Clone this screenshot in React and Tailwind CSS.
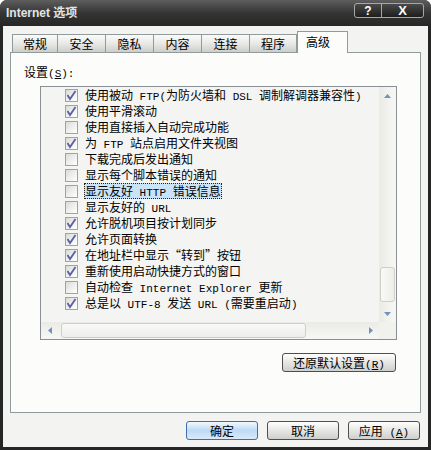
import React from 'react';

const items = [
    { label: '使用被动 FTP(为防火墙和 DSL 调制解调器兼容性)', checked: true },
    { label: '使用平滑滚动', checked: true },
    { label: '使用直接插入自动完成功能', checked: false },
    { label: '为 FTP 站点启用文件夹视图', checked: true },
    { label: '下载完成后发出通知', checked: false },
    { label: '显示每个脚本错误的通知', checked: false },
    { label: '显示友好 HTTP 错误信息', checked: false, focus: true },
    { label: '显示友好的 URL', checked: false },
    { label: '允许脱机项目按计划同步', checked: true },
    { label: '允许页面转换', checked: true },
    { label: '在地址栏中显示“转到”按钮', checked: true },
    { label: '重新使用启动快捷方式的窗口', checked: true },
    { label: '自动检查 Internet Explorer 更新', checked: false },
    { label: '总是以 UTF-8 发送 URL (需要重启动)', checked: true },
];

const tabs = [
    { label: '常规', w: 'w-[46px] border-l' },
    { label: '安全', w: 'w-[48px]' },
    { label: '隐私', w: 'w-[48px]' },
    { label: '内容', w: 'w-[48px]' },
    { label: '连接', w: 'w-[48px]' },
    { label: '程序', w: 'w-[47px]' },
];

// latin runs are half width, like the bitmap font in the shot
const Mixed = ({ text }) => (
    <>
        {text.split(/([\x00-\x7f]+)/).map((part, i) =>
            i % 2 ? (
                <span key={i} className="font-['Liberation_Mono',monospace] text-[11px] whitespace-pre">{part}</span>
            ) : (
                <span key={i}>{part}</span>
            )
        )}
    </>
);

const Check = ({ on }) => (
    <span className="w-[13px] h-[13px] shrink-0 border border-[#9aa3b6] bg-linear-to-br from-[#dcdcd6] to-white flex items-center justify-center">
        {on && (
            <svg width="11" height="11" viewBox="0 0 11 11">
                <path d="M1.5 5 L4 9 L9.5 1" stroke="#5d5fa6" strokeWidth="1.8" fill="none" />
            </svg>
        )}
    </span>
);

const Arrow = ({ dir }) => {
    const pts = {
        up: '0,4 7,4 3.5,0',
        down: '0,0 7,0 3.5,4',
        left: '4,0 4,7 0,3.5',
        right: '0,0 0,7 4,3.5',
    }[dir];
    const vert = dir === 'up' || dir === 'down';
    return (
        <svg width={vert ? 7 : 4} height={vert ? 4 : 7} viewBox={vert ? '0 0 7 4' : '0 0 4 7'}>
            <polygon points={pts} fill="#7392b8" />
        </svg>
    );
};

const Btn = ({ children, w, primary }) => (
    <div
        className={`${w} h-[19px] rounded-[3px] border text-center text-[12px] leading-[17px] text-black whitespace-nowrap ${
            primary
                ? 'border-[#3f6fa6] bg-linear-to-b from-[#f2f8fe] via-[#bcdaf5] to-[#dbeafa]'
                : 'border-[#4e4e4e] bg-linear-to-b from-white via-[#e6e6e4] to-[#cfcfcc]'
        }`}
    >
        {children}
    </div>
);

const App = () => {
    return (
        <div className="w-[431px] h-[450px] bg-white font-['Noto_Sans_CJK_SC','Liberation_Sans',sans-serif]">
            <div className="w-full h-full flex flex-col bg-[#252525] rounded-t-[7px] overflow-hidden">
                {/* Title bar */}
                <div className="h-[26px] shrink-0 flex justify-between pl-[6px] pr-[7px] bg-linear-to-b from-[#5e5e5e] via-[#353535] to-[#262626]">
                    <span className="self-center text-[12px] font-bold leading-none text-[#e4e4e4] font-['Liberation_Sans','Noto_Sans_CJK_SC',sans-serif]">
                        Internet 选项
                    </span>
                    <div className="mt-[3px] h-[15px] flex rounded-[3px] border border-[#a8a8a8] bg-linear-to-b from-[#4a4a4a] to-[#1e1e1e] overflow-hidden">
                        <div className="w-[27px] flex items-center justify-center border-r border-[#a8a8a8] text-white text-[12px] font-bold leading-none font-['Liberation_Sans',sans-serif]">?</div>
                        <div className="w-[41px] flex items-center justify-center text-white text-[13px] font-bold leading-none font-['Liberation_Sans',sans-serif]">X</div>
                    </div>
                </div>

                {/* Body */}
                <div className="flex-1 mx-[3px] mb-[3px] bg-[#f3f3f1] px-[7px] pt-[5px] pb-[7px] flex flex-col">
                    {/* Tabs */}
                    <div className="h-[22px] -mb-px flex items-end pl-[2px] relative z-10">
                        {tabs.map((t) => (
                            <div
                                key={t.label}
                                className={`${t.w} h-[18px] mb-px border-t border-r border-[#919b9c] bg-linear-to-b from-[#fbfbfb] via-[#e8e8e6] to-[#cdcdca] text-[12px] leading-[17px] text-center text-black`}
                            >
                                {t.label}
                            </div>
                        ))}
                        <div className="w-[51px] h-[22px] border border-b-0 border-[#919b9c] bg-[#fcfcfb] text-[12px] leading-none pt-[4px] pl-[8px] text-black">
                            高级
                        </div>
                    </div>

                    {/* Panel */}
                    <div className="h-[361px] border border-[#919b9c] bg-[#fcfcfb] flex flex-col pl-[13px]">
                        <div className="mt-[12px] text-[12px] leading-[14px] text-black">
                            设置<Mixed text="(" /><u className="underline-offset-1"><Mixed text="S" /></u><Mixed text="):" />
                        </div>

                        {/* List box */}
                        <div className="mt-[5px] ml-[16px] w-[357px] h-[254px] border border-[#8a8f96] bg-[#f4f4f2] flex flex-col">
                            <div className="flex flex-1 min-h-0">
                                <div className="flex-1">
                                    {items.map((item, index) => (
                                        <div key={index} className="h-[16px] flex items-center pl-[24px]">
                                            <Check on={item.checked} />
                                            <span
                                                className={`ml-[6px] block h-[16px] whitespace-nowrap text-[12px] leading-[14px] text-black border ${
                                                    item.focus ? 'border-dotted border-[#222] bg-[#c9e3f8]' : 'border-transparent'
                                                }`}
                                            >
                                                <Mixed text={item.label} />
                                            </span>
                                        </div>
                                    ))}
                                </div>
                                {/* Vertical scrollbar */}
                                <div className="w-[17px] flex flex-col bg-linear-to-r from-[#ebebe6] to-[#f7f7f4]">
                                    <div className="h-[17px] flex items-center justify-center">
                                        <Arrow dir="up" />
                                    </div>
                                    <div className="h-[163px]" />
                                    <div className="h-[35px] mx-px rounded-[3px] border border-[#cfcfc8] bg-linear-to-r from-[#f9f9f7] to-[#ededE9]" />
                                    <div className="h-[3px]" />
                                    <div className="h-[17px] flex items-center justify-center">
                                        <Arrow dir="down" />
                                    </div>
                                </div>
                            </div>
                            {/* Horizontal scrollbar */}
                            <div className="h-[17px] flex bg-linear-to-b from-[#ebebe6] to-[#f7f7f4]">
                                <div className="w-[17px] flex items-center justify-center">
                                    <Arrow dir="left" />
                                </div>
                                <div className="w-[3px]" />
                                <div className="w-[245px] my-px rounded-[3px] border border-[#cfcfc8] bg-linear-to-b from-[#f9f9f7] to-[#ededE9]" />
                                <div className="flex-1" />
                                <div className="w-[17px] flex items-center justify-center">
                                    <Arrow dir="right" />
                                </div>
                                <div className="w-[17px] bg-[#f1f1ee]" />
                            </div>
                        </div>

                        <div className="mt-[13px] ml-[258px]">
                            <Btn w="w-[114px]">
                                还原默认设置<Mixed text="(" /><u className="underline-offset-1"><Mixed text="R" /></u><Mixed text=")" />
                            </Btn>
                        </div>
                    </div>

                    {/* Dialog buttons */}
                    <div className="mt-[8px] h-[19px] flex justify-end gap-[9px] pr-px">
                        <Btn w="w-[72px]" primary>确定</Btn>
                        <Btn w="w-[72px]">取消</Btn>
                        <Btn w="w-[72px]">
                            应用<Mixed text=" (" /><u className="underline-offset-1"><Mixed text="A" /></u><Mixed text=")" />
                        </Btn>
                    </div>
                </div>
            </div>
        </div>
    );
};

export default App;
